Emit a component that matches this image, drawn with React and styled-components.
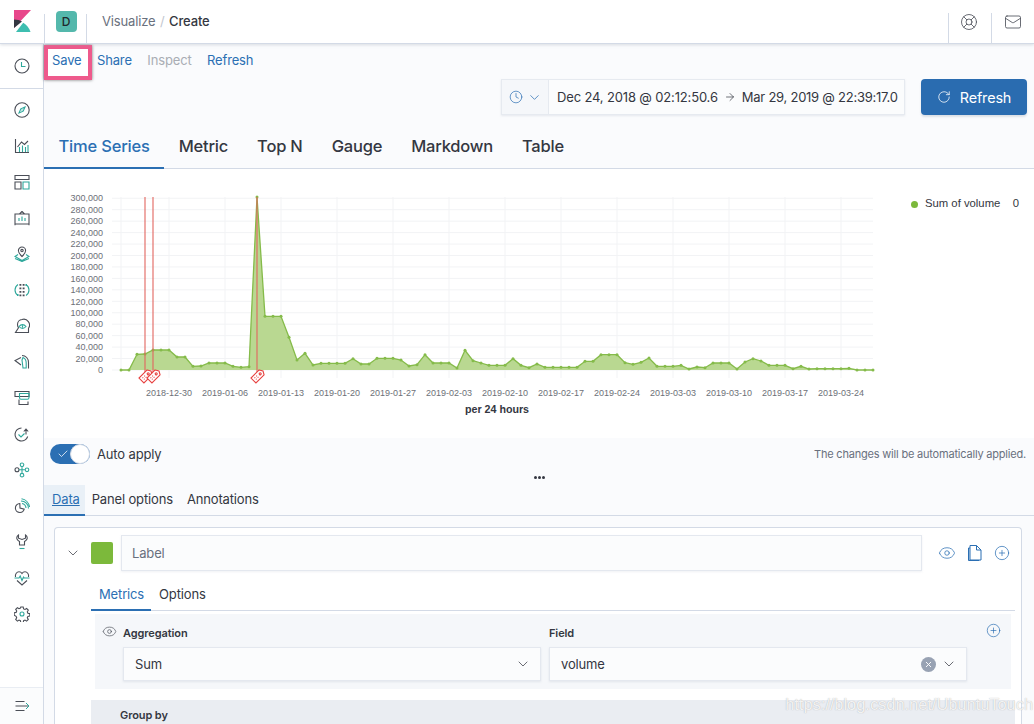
import React from "react";
import styled, { createGlobalStyle } from "styled-components";
import { ArrowRight, Check, ChevronDown, CirclePlus, Clock, Eye, LifeBuoy, Mail, RotateCw, X } from "lucide-react";

const GlobalStyle = createGlobalStyle`
  html, body { margin: 0; padding: 0; height: 100%; }
  body { font-family: Inter, "Liberation Sans", sans-serif; color: #343741; background: #fafbfd; overflow: hidden; letter-spacing: -0.15px; }
  * { box-sizing: border-box; }
  svg { letter-spacing: 0; }
`;

const blue = "#2b6fb3";
const dark = "#4a4e57";
const teal = "#2fa89c";

const Page = styled.div`
  position: relative;
  width: 1034px;
  height: 724px;
  overflow: hidden;
  display: flex;
  flex-direction: column;
`;

const Header = styled.header`
  height: 44px;
  flex: none;
  display: flex;
  align-items: stretch;
  background: #fff;
  border-bottom: 1px solid #d3dae6;
  box-shadow: 0 1px 3px rgba(152, 162, 179, 0.35);
  z-index: 2;
`;

const LogoCell = styled.div`
  width: 44px;
  display: flex;
  padding: 10px 0 0 14px;
`;

const AvatarCell = styled.div`
  width: 43px;
  margin-top: 14px;
  border-left: 1px solid #d3dae6;
  border-right: 1px solid #d3dae6;
  display: flex;
  justify-content: center;
`;

const Avatar = styled.div`
  width: 21px;
  height: 21px;
  margin-top: -3px;
  margin-left: 1px;
  border-radius: 4px;
  background: #54b8ac;
  color: #1f2a2c;
  font-size: 12px;
  font-weight: 500;
  display: flex;
  align-items: center;
  justify-content: center;
`;

const Crumbs = styled.nav`
  display: flex;
  align-items: center;
  gap: 4.5px;
  padding-left: 15px;
  font-size: 13px;
  flex: 1;
  margin-bottom: 2px;
`;

const Crumb = styled.span`
  color: ${(p) => (p.$current ? "#343741" : p.$sep ? "#c2c7d0" : "#69707d")};
  font-weight: ${(p) => (p.$current ? 500 : 400)};
`;

const HeaderAction = styled.div`
  width: 43px;
  margin-top: 13px;
  padding: 0 ${(p) => p.$inset || 0}px 14px 0;
  border-left: 1px solid #d3dae6;
  display: flex;
  align-items: flex-start;
  justify-content: center;
  color: #4a4e57;
`;

const Body = styled.div`
  flex: 1;
  display: flex;
  min-height: 0;
`;

const Sidebar = styled.aside`
  width: 44px;
  flex: none;
  background: #fff;
  border-right: 1px solid #d3dae6;
  display: flex;
  flex-direction: column;
`;

const RecentSlot = styled.div`
  height: 45px;
  flex: none;
  display: flex;
  align-items: center;
  justify-content: center;
  border-bottom: 1px solid #d3dae6;
`;

const NavList = styled.div`
  flex: 1;
  display: flex;
  flex-direction: column;
  align-items: center;
  padding-top: 3px;
`;

const NavItem = styled.div`
  height: 36px;
  flex: none;
  display: flex;
  align-items: center;
  justify-content: center;
`;

const CollapseSlot = styled.div`
  height: 37px;
  flex: none;
  display: flex;
  align-items: center;
  justify-content: center;
  border-top: 1px solid #e9edf3;
  background: #fbfcfd;
`;

const Main = styled.main`
  flex: 1;
  min-width: 0;
  display: flex;
  flex-direction: column;
`;

const TopMenu = styled.div`
  height: 35px;
  flex: none;
  display: flex;
  align-items: center;
  padding: 0 0 3px 8px;
  gap: 15.5px;
  font-size: 13px;
`;

const MenuLink = styled.span`
  color: ${(p) => (p.$disabled ? "#a9adb4" : blue)};
  position: relative;
  ${(p) =>
    p.$marked &&
    `
    z-index: 0;
    &::before {
      content: "";
      position: absolute;
      z-index: -1;
      left: -8px;
      right: -11px;
      top: -7px;
      bottom: -12px;
      background: #fff;
      border: 4px solid #ee5a8c;
      box-shadow: 0 0 3px rgba(0, 0, 0, 0.55);
    }
  `}
`;

const TimeRow = styled.div`
  height: 36px;
  flex: none;
  display: flex;
  justify-content: flex-end;
  gap: 16px;
  padding-right: 7px;
`;

const Picker = styled.div`
  width: 404px;
  display: flex;
  border: 1px solid #e6eaf0;
  box-shadow: 0 1px 2px rgba(152, 162, 179, 0.2);
  background: #fbfcfd;
`;

const QuickSelect = styled.div`
  width: 47px;
  flex: none;
  display: flex;
  align-items: center;
  gap: 4px;
  padding-left: 7px;
  border-right: 1px solid #e6eaf0;
  background: #f5f7fa;
  color: ${blue};
`;

const DateRange = styled.div`
  flex: 1;
  display: flex;
  align-items: center;
  gap: 6px;
  padding-left: 8px;
  font-size: 13px;
  color: #343741;
  white-space: nowrap;
`;

const DateEnd = styled.span`
  letter-spacing: -0.25px;
`;

const RefreshButton = styled.div`
  width: 106px;
  border-radius: 4px;
  background: #2a6cb0;
  color: #fff;
  display: flex;
  align-items: center;
  justify-content: center;
  gap: 9px;
  font-size: 14.4px;
  font-weight: 400;
  box-shadow: 0 2px 2px rgba(152, 162, 179, 0.3);
`;

const ModeTabs = styled.div`
  height: 54px;
  flex: none;
  display: flex;
  align-items: flex-end;
  border-bottom: 1px solid #d3dae6;
`;

const ModeTab = styled.div`
  height: 44px;
  padding: 11px 14.5px 0;
  margin-bottom: -1px;
  font-size: 16.5px;
  letter-spacing: -0.2px;
  font-weight: 500;
  color: ${(p) => (p.$active ? blue : "#343741")};
  border-bottom: 2px solid ${(p) => (p.$active ? blue : "transparent")};
`;

const ChartArea = styled.section`
  height: 269px;
  flex: none;
  background: #fff;
  display: flex;
  align-items: flex-start;
`;

const Legend = styled.div`
  display: flex;
  align-items: center;
  font-family: "Liberation Sans", sans-serif;
  font-size: 11.3px;
  letter-spacing: 0;
  color: #343741;
  margin: 28px 0 0 27px;
  width: 108px;
`;

const LegendDot = styled.span`
  width: 7px;
  height: 7px;
  border-radius: 50%;
  background: #7cb93b;
  margin: 3px 7px 0 0;
  flex: none;
`;

const LegendValue = styled.span`
  margin-left: auto;
`;

const ApplyRow = styled.div`
  height: 32px;
  flex: none;
  display: flex;
  align-items: center;
  justify-content: space-between;
  padding: 0 8px 0 6px;
`;

const ToggleLabel = styled.label`
  display: flex;
  align-items: center;
  gap: 7px;
  font-size: 13px;
`;

const Toggle = styled.span`
  position: relative;
  width: 40px;
  height: 20px;
  border-radius: 10px;
  background: ${blue};
  color: #fff;
  display: flex;
  align-items: center;
  padding-left: 7px;
`;

const ToggleKnob = styled.span`
  position: absolute;
  right: 0;
  top: 0;
  width: 20px;
  height: 20px;
  border-radius: 50%;
  background: #fff;
  border: 1px solid #d3dae6;
`;

const Note = styled.span`
  font-size: 11px;
  letter-spacing: -0.2px;
  color: #69707d;
`;

const Resizer = styled.div`
  height: 15px;
  flex: none;
  display: flex;
  align-items: center;
  justify-content: center;
  gap: 1px;
`;

const Dot = styled.span`
  width: 3px;
  height: 3px;
  background: #343741;
  border-radius: 50%;
`;

const PanelTabs = styled.div`
  height: 31px;
  flex: none;
  display: flex;
  border-bottom: 1px solid #d3dae6;
  font-size: 13px;
`;

const PanelTab = styled.div`
  padding: ${(p) => (p.$active ? "6px 5px 0 8px" : "6px 7px 0")};
  margin-bottom: -1px;
  color: ${(p) => (p.$active ? blue : "#343741")};
  text-decoration: ${(p) => (p.$active ? "underline" : "none")};
  background: ${(p) => (p.$active ? "#e9f0f7" : "transparent")};
  border-bottom: 2px solid ${(p) => (p.$active ? blue : "transparent")};
`;

const SeriesPanel = styled.section`
  flex: 1;
  margin: 11px 12px 0 10px;
  padding: 7px 6px 0 12px;
  background: #fff;
  border: 1px solid #d3dae6;
  border-bottom: none;
  border-radius: 4px 4px 0 0;
  min-height: 0;
`;

const SeriesHead = styled.div`
  height: 36px;
  display: flex;
  align-items: center;
`;

const Caret = styled.span`
  width: 24px;
  display: flex;
  color: #343741;
  margin-left: -2px;
  flex: none;
  & + * { margin-left: 2px; }
`;

const Swatch = styled.span`
  width: 22px;
  height: 22px;
  flex: none;
  border-radius: 2px;
  background: #7cb93b;
  margin-right: 8px;
`;

const LabelInput = styled.div`
  width: 801px;
  height: 36px;
  flex: none;
  display: flex;
  align-items: center;
  padding-left: 10px;
  font-size: 13px;
  color: #69707d;
  background: #fbfcfd;
  border: 1px solid #e4e8ef;
  box-shadow: 0 1px 2px rgba(152, 162, 179, 0.15);
`;

const SeriesActions = styled.div`
  display: flex;
  align-items: center;
  gap: 11px;
  margin-left: 16px;
  color: ${blue};
`;

const SeriesTabs = styled.div`
  height: 33px;
  margin: 7px 0 0 24px;
  display: flex;
  border-bottom: 1px solid #d3dae6;
  font-size: 13px;
`;

const SeriesTab = styled.div`
  padding: 8px 7px 0 8px;
  margin-bottom: -1px;
  color: ${(p) => (p.$active ? blue : "#343741")};
  border-bottom: 2px solid ${(p) => (p.$active ? blue : "transparent")};
`;

const AggPanel = styled.div`
  position: relative;
  height: 75px;
  margin: 3px 4px 0 28px;
  padding: 10px 0 0 28px;
  background: #f5f7fa;
  display: flex;
  gap: 8px;
`;

const EyeSlot = styled.span`
  position: absolute;
  left: 7px;
  top: 10px;
  color: #4a4e57;
  display: flex;
`;

const AddSlot = styled.span`
  position: absolute;
  right: 10px;
  top: 9px;
  color: ${blue};
  display: flex;
`;

const Field = styled.div`
  width: ${(p) => p.$width}px;
  flex: none;
`;

const FieldLabel = styled.div`
  font-size: 11px;
  font-weight: 600;
  letter-spacing: -0.1px;
  color: #343741;
  height: 23px;
  padding-top: 2px;
`;

const SelectBox = styled.div`
  height: 34px;
  display: flex;
  align-items: center;
  padding: 0 9px 0 11px;
  font-size: 13px;
  background: #fbfcfd;
  border: 1px solid #e4e8ef;
  box-shadow: 0 1px 2px rgba(152, 162, 179, 0.2);
  gap: 5px;
`;

const SelectValue = styled.span`
  flex: 1;
`;

const ClearBadge = styled.span`
  width: 15px;
  height: 15px;
  border-radius: 50%;
  background: #98a2b3;
  color: #fff;
  display: flex;
  align-items: center;
  justify-content: center;
`;

const GroupPanel = styled.div`
  height: 40px;
  margin: 11px 0 0 24px;
  padding: 8px 0 0 29px;
  background: #eaedf2;
  font-size: 11px;
  font-weight: 600;
  letter-spacing: -0.1px;
  color: #343741;
`;

const Watermark = styled.div`
  position: absolute;
  right: 1px;
  bottom: 10px;
  font-family: "Liberation Sans", sans-serif;
  font-size: 16.4px;
  letter-spacing: 0;
  color: rgba(255, 255, 255, 0.85);
  text-shadow: 0 0 1px rgba(120, 120, 120, 0.6);
  white-space: nowrap;
`;

const Logo = () => (
  <svg width="17" height="22" viewBox="0 0 17 22">
    <path d="M0 0H17L0 18Z" fill="#e8478b" />
    <path d="M0 18V9.5C3.5 9.5 6 10.3 8 11.6L0 18Z" fill="#343741" />
    <path d="M2 22L9.2 12.8C12.6 15 15.5 18.2 16.5 22Z" fill="#3ebeb0" />
  </svg>
);

// each nav icon: dark strokes, teal strokes
const NavIcon = ({ dk, tl }) => (
  <svg width="16" height="16" viewBox="0 0 16 16" fill="none" strokeWidth="1.1">
    <path d={dk} stroke={dark} />
    <path d={tl} stroke={teal} />
  </svg>
);

const navIcons = [
  { dk: "M8 1a7 7 0 1 0 0 14A7 7 0 0 0 8 1Z", tl: "M7.5 4v4.5h4" },
  { dk: "M8 .8a7.2 7.2 0 1 0 0 14.4A7.2 7.2 0 0 0 8 .8Z", tl: "M11 5L6.8 6.8 5 11l4.2-1.8Zm-3 2.5v1" },
  { dk: "M1.5 1v13.5H15M3.5 9L7.5 4l3 2.5L14 3", tl: "M5.5 9v5M8.5 7.5V14M11.5 9v5M14 7v7" },
  { dk: "M1 1.5h14v4H1ZM1 8h6v7H1Z", tl: "M9 8h6v7H9Z" },
  { dk: "M1 4h14v10H1ZM8 1.5L5.5 4M8 1.5L10.5 4M1 14v1.2M15 14v1.2", tl: "M5 11V8M8 11V6.5M11 11V8" },
  { dk: "M8 1a3.6 3.6 0 0 0-3.6 3.6C4.4 7 8 10.5 8 10.5s3.6-3.5 3.6-5.9A3.6 3.6 0 0 0 8 1ZM8 3.4a1.2 1.2 0 1 0 0 2.4 1.2 1.2 0 0 0 0-2.4Z", tl: "M4 8.5L1 10.5l7 4 7-4-3-2M1 12.5l7 3 7-3" },
  { dk: "M6 2.5h.8v.8H6ZM9.2 2.5h.8v.8h-.8ZM6 6h.8v.8H6ZM9.2 6h.8v.8h-.8ZM6 9.5h.8v.8H6ZM9.2 9.5h.8v.8h-.8ZM6 13h.8v.8H6ZM9.2 13h.8v.8h-.8Z", tl: "M4 2.5A6.8 6.8 0 0 0 1 8a6.8 6.8 0 0 0 3 5.5M12 2.5A6.8 6.8 0 0 1 15 8a6.8 6.8 0 0 1-3 5.5M3 13.5l1 0 0-1.5M13 2.5l-1 0 0 1.5" },
  { dk: "M1.5 14.5h13v-4.2A5.8 5.8 0 0 0 8 1.5a5 5 0 0 0-4.5 5c0 1.6.5 2.6 1 3.3Z", tl: "M5 8.5c2-2.5 5-2.5 7 0-2 2.5-5 2.5-7 0ZM8.5 7.5v2" },
  { dk: "M8 1.5c3.8 0 6.5 3 6.5 7v6M7 3.5L1 6.5l6 4.5", tl: "M8 6l1-2.5c2 .8 3.2 3 3.2 5.5v5H9Z" },
  { dk: "M1 1.5h14v5H1ZM5 9.5v5h9v-3", tl: "M5.5 3.5h9.5v4c0 1-.6 1.8-1.6 1.8H7c-1 0-1.5-.8-1.5-1.8Z" },
  { dk: "M12 3.5L12 8.5M9.8 5.5L12 3 14.2 5.5M13.7 10.5A6.5 6.5 0 1 1 7.5 2", tl: "M4.5 8.5L7 11l3.5-3.5" },
  { dk: "M3 5.8a2 2 0 1 0 0 4 2 2 0 0 0 0-4Z", tl: "M8 1a1.8 1.8 0 1 0 0 3.6A1.8 1.8 0 0 0 8 1ZM8 11.4a1.8 1.8 0 1 0 0 3.6 1.8 1.8 0 0 0 0-3.6ZM13 6a1.8 1.8 0 1 0 0 3.6A1.8 1.8 0 0 0 13 6ZM5 7.8h6M8 4.6v6.8" },
  { dk: "M6 14.5a4.5 4.5 0 1 1-.2-9l.2 4.5 4.2 1.2A4.5 4.5 0 0 1 6 14.5Z", tl: "M7 3a7.5 7.5 0 0 1 7.5 7.5M7.5 .8A9.5 9.5 0 0 1 15.5 9M8 5.5a5 5 0 0 1 4 4.5" },
  { dk: "M4.5 1C3 2 2.5 3.5 3 5c.5 1.2 1.5 2 2.5 2.4V11h5V7.4C11.5 7 12.5 6.2 13 5c.5-1.5 0-3-1.5-4v3.2L8 5.5 4.5 4.2Z", tl: "M5.5 14.5h5" },
  { dk: "M1.5 7C.8 4 3 1.8 5 1.8c1.2 0 2.3.6 3 1.7.7-1.1 1.8-1.7 3-1.7 2 0 4.2 2.2 3.5 5.2M3 10.5L8 15l5-4.5", tl: "M.5 8h4.5l1.2-2 1.8 4.5L9.5 7l.8 1H15.5" },
  { dk: "M6.8 1h2.4l.4 1.9 1.4.6 1.6-1 1.7 1.7-1 1.6.6 1.4 1.9.4v2.4l-1.9.4-.6 1.4 1 1.6-1.7 1.7-1.6-1-1.4.6-.4 1.9H6.8l-.4-1.9-1.4-.6-1.6 1-1.7-1.7 1-1.6-.6-1.4L.2 9.2V6.8l1.9-.4.6-1.4-1-1.6 1.7-1.7 1.6 1 1.4-.6Z", tl: "M8 6a2 2 0 1 0 0 4 2 2 0 0 0 0-4Z" },
];

const yTicks = [0, 20, 40, 60, 80, 100, 120, 140, 160, 180, 200, 220, 240, 260, 280, 300];
const xTicks = ["2018-12-30", "2019-01-06", "2019-01-13", "2019-01-20", "2019-01-27", "2019-02-03", "2019-02-10", "2019-02-17", "2019-02-24", "2019-03-03", "2019-03-10", "2019-03-17", "2019-03-24"];

// bar heights in px above the zero line, one per day
const series = [
  0, 0, 15.7, 16, 20, 20, 20, 13, 13, 3.7, 4, 7, 7, 7, 3.7, 2.7, 3.3, 173, 53.7, 53.7, 53.7, 32.7, 10, 16.7, 5, 6.7, 6.7, 6.7, 6.7, 11.3,
  6, 6, 11.7, 11.7, 11.7, 10, 4, 5.3, 15.3, 7, 7, 7, 2, 19.7, 9.3, 7, 4.7, 4.7, 4.7, 11.3, 4.7, 2.3, 6, 2.7, 2.7, 2.7, 2.7, 2.7, 8.7, 8.7,
  15.3, 15.3, 15.3, 7.3, 5.7, 7.7, 12, 3.7, 3.7, 3.7, 4.7, 1, 3, 2.3, 7, 7, 7, 1, 8, 11.3, 9, 4.7, 4.7, 4.7, 1.3, 3.7, 1, 1.3, 1.3, 1.3, 1.3, 1.7, 0, 0, 0,
];

const X0 = 77;
const ZERO = 201;
const pts = series.map((h, i) => [X0 + i * 8, ZERO - h]);
const line = pts.map((p) => p.join(",")).join(" ");
const area = `${X0},${ZERO} ${line} ${X0 + 94 * 8},${ZERO}`;

const Tag = ({ x }) => (
  <g transform={`translate(${x} 208) rotate(45)`} fill="#fff" stroke="#e7403f" strokeWidth="1.1">
    <path d="M-3.5 -6.5L0 -8.5 3.5 -6.5V5H-3.5Z" />
    <circle cx="0" cy="-4.5" r="1" />
    <path d="M-1.5 -.5h3M-1.5 2h3" strokeDasharray="1 1" />
  </g>
);

const Chart = () => (
  <svg width="840" height="269" viewBox="0 0 840 269">
    <g stroke="#f2f3f5" strokeWidth="1">
      {yTicks.map((t) => (
        <line key={t} x1="68" x2="829" y1={ZERO - t * 0.5725} y2={ZERO - t * 0.5725} />
      ))}
      {xTicks.map((t, i) => (
        <line key={t} x1={125 + i * 56} x2={125 + i * 56} y1="28" y2="209" />
      ))}
      <line x1="77" x2="77" y1="28" y2="201" />
    </g>
    <polygon points={area} fill="#b9d891" />
    <polyline points={line} fill="none" stroke="#85bb4a" strokeWidth="1.3" />
    {pts.map((p, i) => (
      <circle key={i} cx={p[0]} cy={p[1]} r="1.5" fill="#85bb4a" />
    ))}
    {[101, 109, 213].map((x) => (
      <line key={x} x1={x} x2={x} y1="28" y2="203" stroke="#e2655f" strokeWidth="1.1" />
    ))}
    <Tag x={101} />
    <Tag x={109} />
    <Tag x={213} />
    <g fontFamily="Liberation Sans, sans-serif" fontSize="9" fill="#6d7078">
      {yTicks.map((t) => (
        <text key={t} x="59" y={ZERO - t * 0.5725 + 3.2} textAnchor="end">
          {t === 0 ? "0" : `${t},000`}
        </text>
      ))}
      {xTicks.map((t, i) => (
        <text key={t} x={125 + i * 56} y="227" textAnchor="middle">{t}</text>
      ))}
    </g>
    <text x="453" y="244" textAnchor="middle" fontFamily="Liberation Sans, sans-serif" fontSize="10.7" fontWeight="700" fill="#343741">per 24 hours</text>
  </svg>
);

const CopyIcon = () => (
  <svg width="16" height="16" viewBox="0 0 16 16" fill="none" stroke={blue} strokeWidth="1">
    <path d="M3 3H1.5v12.5H12V15" fill="#cfe0f0" />
    <path d="M3 .5h6.5L14 5v10H3Z" fill="#fff" />
    <path d="M9.5 .5V5H14" />
  </svg>
);

const CollapseIcon = () => (
  <svg width="16" height="16" viewBox="0 0 16 16" fill="none" stroke={dark} strokeWidth="1">
    <path d="M1.5 3.5h9M1.5 8H15M1.5 12.500h9" />
    <path d="M12 5l3 3-3 3" stroke={teal} />
  </svg>
);

export default function App() {
  return (
    <Page>
      <GlobalStyle />
      <Header>
        <LogoCell><Logo /></LogoCell>
        <AvatarCell><Avatar>D</Avatar></AvatarCell>
        <Crumbs>
          <Crumb>Visualize</Crumb>
          <Crumb $sep>/</Crumb>
          <Crumb $current>Create</Crumb>
        </Crumbs>
        <HeaderAction $inset={3}><LifeBuoy size={18} strokeWidth={1.1} /></HeaderAction>
        <HeaderAction><Mail size={18} strokeWidth={1.1} /></HeaderAction>
      </Header>
      <Body>
        <Sidebar>
          <RecentSlot><NavIcon {...navIcons[0]} /></RecentSlot>
          <NavList>
            {navIcons.slice(1).map((icon, i) => (
              <NavItem key={i}><NavIcon {...icon} /></NavItem>
            ))}
          </NavList>
          <CollapseSlot><CollapseIcon /></CollapseSlot>
        </Sidebar>
        <Main>
          <TopMenu>
            <MenuLink $marked>Save</MenuLink>
            <MenuLink>Share</MenuLink>
            <MenuLink $disabled>Inspect</MenuLink>
            <MenuLink>Refresh</MenuLink>
          </TopMenu>
          <TimeRow>
            <Picker>
              <QuickSelect>
                <Clock size={14} strokeWidth={1.2} />
                <ChevronDown size={15} strokeWidth={1.2} />
              </QuickSelect>
              <DateRange>
                <span>Dec 24, 2018 @ 02:12:50.6</span>
                <ArrowRight size={12} strokeWidth={1.4} />
                <DateEnd>Mar 29, 2019 @ 22:39:17.0</DateEnd>
              </DateRange>
            </Picker>
            <RefreshButton>
              <RotateCw size={14} strokeWidth={1.3} />
              Refresh
            </RefreshButton>
          </TimeRow>
          <ModeTabs>
            <ModeTab $active>Time Series</ModeTab>
            <ModeTab>Metric</ModeTab>
            <ModeTab>Top N</ModeTab>
            <ModeTab>Gauge</ModeTab>
            <ModeTab>Markdown</ModeTab>
            <ModeTab>Table</ModeTab>
          </ModeTabs>
          <ChartArea>
            <Chart />
            <Legend>
              <LegendDot />
              Sum of volume
              <LegendValue>0</LegendValue>
            </Legend>
          </ChartArea>
          <ApplyRow>
            <ToggleLabel>
              <Toggle>
                <Check size={12} strokeWidth={1.5} />
                <ToggleKnob />
              </Toggle>
              Auto apply
            </ToggleLabel>
            <Note>The changes will be automatically applied.</Note>
          </ApplyRow>
          <Resizer><Dot /><Dot /><Dot /></Resizer>
          <PanelTabs>
            <PanelTab $active>Data</PanelTab>
            <PanelTab>Panel options</PanelTab>
            <PanelTab>Annotations</PanelTab>
          </PanelTabs>
          <SeriesPanel>
            <SeriesHead>
              <Caret><ChevronDown size={16} strokeWidth={1.1} /></Caret>
              <Swatch />
              <LabelInput>Label</LabelInput>
              <SeriesActions>
                <Eye size={18} strokeWidth={1} />
                <CopyIcon />
                <CirclePlus size={16} strokeWidth={1.1} />
              </SeriesActions>
            </SeriesHead>
            <SeriesTabs>
              <SeriesTab $active>Metrics</SeriesTab>
              <SeriesTab>Options</SeriesTab>
            </SeriesTabs>
            <AggPanel>
              <EyeSlot><Eye size={15} strokeWidth={1.1} /></EyeSlot>
              <Field $width={418}>
                <FieldLabel>Aggregation</FieldLabel>
                <SelectBox>
                  <SelectValue>Sum</SelectValue>
                  <ChevronDown size={16} strokeWidth={1.1} />
                </SelectBox>
              </Field>
              <Field $width={418}>
                <FieldLabel>Field</FieldLabel>
                <SelectBox>
                  <SelectValue>volume</SelectValue>
                  <ClearBadge><X size={9} strokeWidth={2.5} /></ClearBadge>
                  <ChevronDown size={16} strokeWidth={1.1} />
                </SelectBox>
              </Field>
              <AddSlot><CirclePlus size={15} strokeWidth={1.1} /></AddSlot>
            </AggPanel>
            <GroupPanel>Group by</GroupPanel>
          </SeriesPanel>
        </Main>
      </Body>
      <Watermark>https://blog.csdn.net/UbuntuTouch</Watermark>
    </Page>
  );
}
